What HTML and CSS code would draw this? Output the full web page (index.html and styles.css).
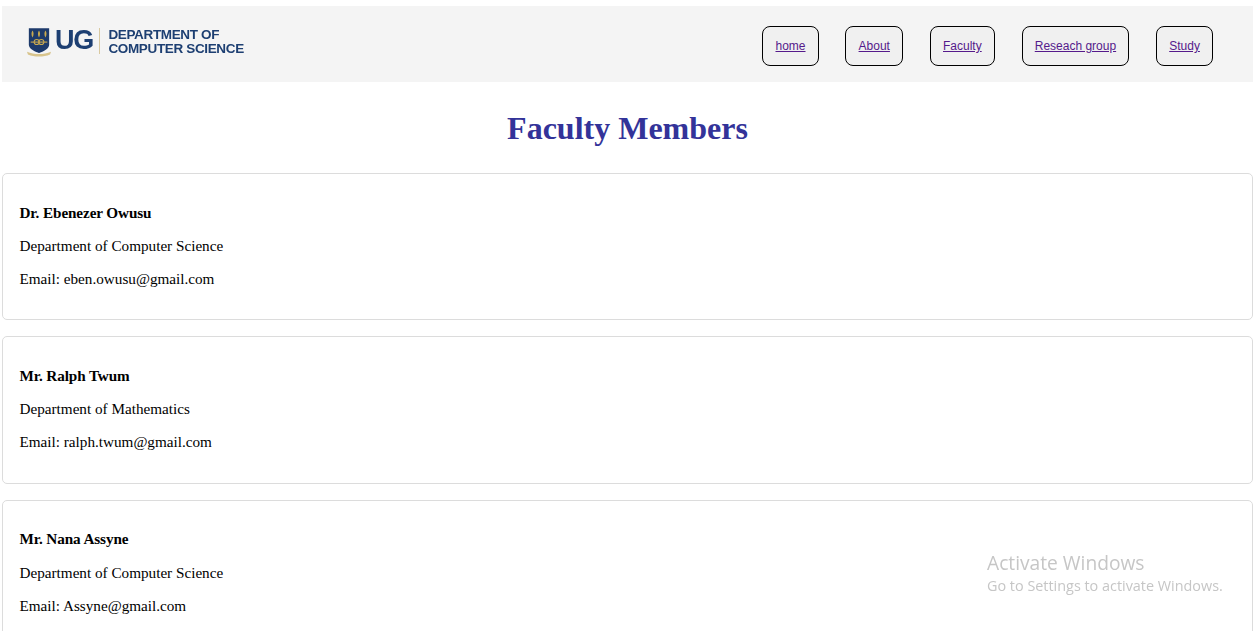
FILE: index.html
```html
<!DOCTYPE html>
<html lang="en">
<head>
<meta charset="utf-8">
<title>Faculty Members</title>
<link rel="stylesheet" href="styles.css">
</head>
<body>
<header class="topbar">
  <a class="logo" href="#">
    <svg class="crest" viewBox="0 0 26 32" width="24" height="30" aria-hidden="true">
      <path d="M2 1H24V19C24 23 19 26 13 28C7 26 2 23 2 19Z" fill="#1d3a6b"/>
      <path d="M6 3.500c1.500 2 1.500 5 0 7.500c-1.500-2.500-1.500-5.500 0-7.500zM13 3.500c1.500 2 1.500 5 0 7.500c-1.500-2.500-1.500-5.500 0-7.500zM20 3.500c1.500 2 1.500 5 0 7.500c-1.500-2.500-1.500-5.500 0-7.500z" fill="#c9a94f"/>
      <path d="M4 15.500h18v1.200H4z" fill="#c9a94f"/>
      <circle cx="10.500" cy="16" r="2.800" fill="none" stroke="#c9a94f" stroke-width="1.100"/>
      <circle cx="15.500" cy="16" r="2.800" fill="none" stroke="#c9a94f" stroke-width="1.100"/>
      <path d="M0 26.500C8 30 18 30 26 26.500L25 29.500C18 32.500 8 32.500 1 29.500Z" fill="#d8c48c"/>
    </svg>
    <span class="logo-ug">UG</span>
    <span class="logo-rule"></span>
    <span class="logo-dept">DEPARTMENT OF<br>COMPUTER SCIENCE</span>
  </a>
  <nav class="nav">
    <a class="nav-item" href="#home">home</a>
    <a class="nav-item" href="#about">About</a>
    <a class="nav-item" href="#faculty">Faculty</a>
    <a class="nav-item" href="#research">Reseach group</a>
    <a class="nav-item" href="#study">Study</a>
  </nav>
</header>
<main>
  <h1 class="title">Faculty Members</h1>
  <section class="card">
    <p class="name">Dr. Ebenezer Owusu</p>
    <p>Department of Computer Science</p>
    <p>Email: eben.owusu@gmail.com</p>
  </section>
  <section class="card">
    <p class="name">Mr. Ralph Twum</p>
    <p>Department of Mathematics</p>
    <p>Email: ralph.twum@gmail.com</p>
  </section>
  <section class="card">
    <p class="name">Mr. Nana Assyne</p>
    <p>Department of Computer Science</p>
    <p>Email: Assyne@gmail.com</p>
  </section>
</main>
<aside class="watermark">
  <div class="wm-title">Activate Windows</div>
  <div class="wm-sub">Go to Settings to activate Windows.</div>
</aside>
</body>
</html>
```
FILE: styles.css
```css
html {
  overflow: hidden;
  height: 100%;
}

body {
  margin: 6px 0 0 2px;
  font-family: "Liberation Serif", "Times New Roman", serif;
  background: #fff;
  color: #000;
}

.topbar {
  height: 76px;
  box-sizing: border-box;
  padding: 4px 40px 0 25px;
  background: #f4f4f4;
  display: flex;
  align-items: center;
  justify-content: space-between;
}

.logo {
  display: flex;
  align-items: center;
  text-decoration: none;
  color: #1d3f72;
  font-family: "Liberation Sans", Arial, sans-serif;
  filter: blur(0.35px);
  position: relative;
  top: -5px;
}

.crest {
  display: block;
  margin: 2px 4px 0 0;
}

.logo-ug {
  font-size: 27px;
  font-weight: 700;
  line-height: 28px;
  letter-spacing: -1.300px;
  padding-bottom: 2px;
}

.logo-rule {
  width: 1px;
  height: 26px;
  background: #d9c9a0;
  margin: 0 8.500px 0 6px;
}

.logo-dept {
  font-size: 13.500px;
  font-weight: 700;
  line-height: 14px;
  letter-spacing: -0.350px;
  padding-top: 1px;
}

.nav {
  display: flex;
  gap: 26.850px;
}

.nav-item {
  display: flex;
  align-items: center;
  height: 40px;
  box-sizing: border-box;
  padding: 0 12.120px;
  border: 1px solid #000;
  border-radius: 8px;
  background: #f0f0f0;
  font-family: "Liberation Sans", Arial, sans-serif;
  font-size: 12px;
  color: #551a8b;
}

.title {
  margin: 28px 0 26px;
  text-align: center;
  font-size: 32px;
  line-height: 37px;
  font-weight: 700;
  color: #333399;
}

.card {
  display: flex;
  flex-direction: column;
  gap: 16.300px;
  box-sizing: border-box;
  height: 147.200px;
  margin-bottom: 16.200px;
  padding: 29.500px 16.500px;
  border: 1px solid #dcdcdc;
  border-radius: 5px;
}

.card p {
  margin: 0;
  font-size: 15.200px;
  line-height: 17px;
}

.card .name {
  font-weight: 700;
  letter-spacing: -0.100px;
}

.watermark {
  position: fixed;
  left: 987px;
  top: 551px;
  font-family: "Open Sans", sans-serif;
  color: #c6c6c6;
}

.wm-title {
  font-size: 19.200px;
  line-height: 24px;
}

.wm-sub {
  font-size: 14.400px;
  line-height: 21px;
}
```
